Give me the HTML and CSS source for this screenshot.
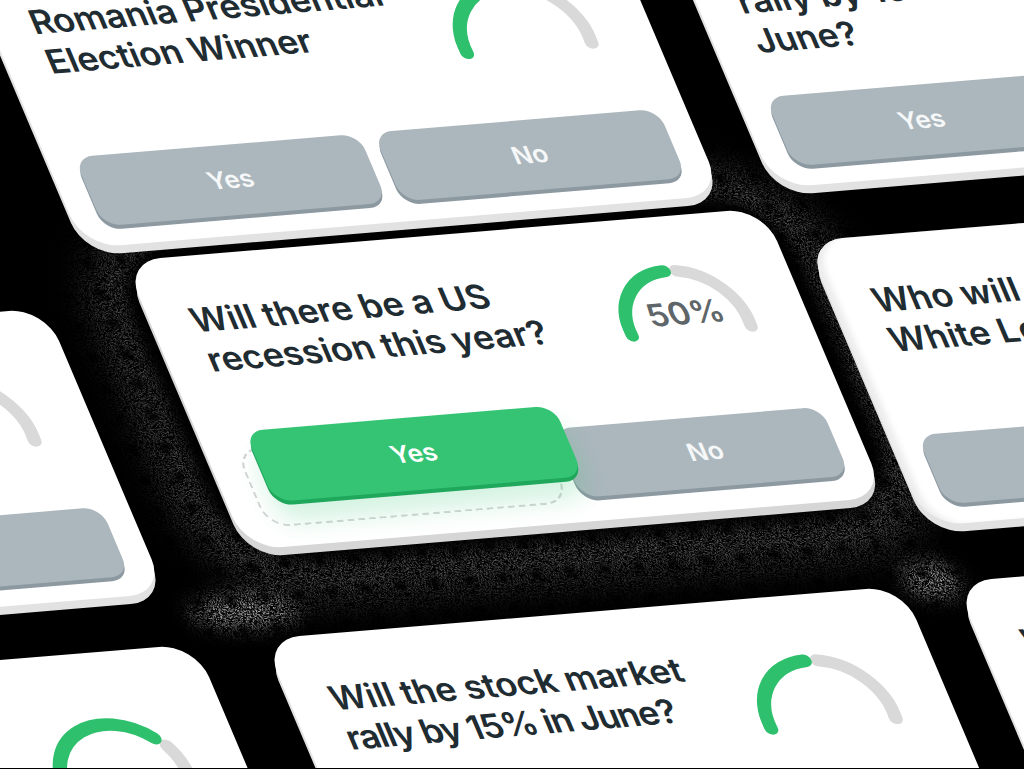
FILE: index.html
```html
<!DOCTYPE html>
<html lang="en">

<head>
    <meta charset="UTF-8">
    <meta name="viewport" content="width=device-width, initial-scale=1.0">
    <title>Prediction cards</title>
    <link rel="stylesheet" href="styles.css">
</head>

<body>
    <svg class="defs" width="0" height="0">
        <filter id="dither" x="-40%" y="-80%" width="180%" height="260%" color-interpolation-filters="sRGB">
            <feTurbulence type="fractalNoise" baseFrequency="1.1" numOctaves="1" seed="4" />
            <feColorMatrix values="0 0 0 0 0  0 0 0 0 0  0 0 0 0 0  9 0 0 0 -4.5" result="grain" />
            <feComposite in="SourceGraphic" in2="grain" operator="in" />
        </filter>
    </svg>

    <main class="scene">
        <!-- sombra pontilhada atras do card principal -->
        <div class="halo"></div>

        <article class="card card--top-left">
            <div class="card-head">
                <h2 class="question">Romania Presidential<br>Election Winner</h2>
                <div class="gauge">
                    <svg class="gauge-arc" viewBox="0 0 124 80">
                        <path class="arc-rest" d="M71 10.7A56 56 0 0 1 117.8 70.9" />
                        <path class="arc-fill" d="M6.2 70.9A56 56 0 0 1 60 10" />
                    </svg>
                </div>
            </div>
            <div class="actions">
                <div class="btn">Yes</div>
                <div class="btn">No</div>
            </div>
        </article>

        <article class="card card--top-right">
            <div class="card-head">
                <h2 class="question">Will the stock market<br>rally by 15% in<br>June?</h2>
            </div>
            <div class="actions">
                <div class="btn">Yes</div>
                <div class="btn">No</div>
            </div>
        </article>

        <article class="card card--left">
            <div class="card-head">
                <h2 class="question">Who will win the<br>next election?</h2>
                <div class="gauge">
                    <svg class="gauge-arc" viewBox="0 0 124 80">
                        <path class="arc-rest" d="M71 10.7A56 56 0 0 1 117.8 70.9" />
                        <path class="arc-fill" d="M6.2 70.9A56 56 0 0 1 60 10" />
                    </svg>
                </div>
            </div>
            <div class="actions">
                <div class="btn">Yes</div>
                <div class="btn">No</div>
            </div>
        </article>

        <article class="card card--right">
            <div class="card-head">
                <h2 class="question">Who will win The<br>White Lotus?</h2>
            </div>
            <div class="actions">
                <div class="btn">Yes</div>
                <div class="btn">No</div>
            </div>
        </article>

        <article class="card card--bottom-left">
            <div class="card-head">
                <h2 class="question">Will it rain<br>tomorrow?</h2>
                <div class="gauge">
                    <svg class="gauge-arc" viewBox="0 0 124 80">
                        <path class="arc-rest" d="M110 36A56 56 0 0 1 117.8 70.9" />
                        <path class="arc-fill" d="M6.2 70.9A56 56 0 0 1 102 28" />
                    </svg>
                </div>
            </div>
        </article>

        <article class="card card--bottom">
            <div class="card-head">
                <h2 class="question">Will the stock market<br><span class="tight">rally by 15% in June?</span></h2>
                <div class="gauge">
                    <svg class="gauge-arc" viewBox="0 0 124 80">
                        <path class="arc-rest" d="M71 10.7A56 56 0 0 1 117.8 70.9" />
                        <path class="arc-fill" d="M6.2 70.9A56 56 0 0 1 60 10" />
                    </svg>
                </div>
            </div>
        </article>

        <article class="card card--bottom-right">
            <div class="card-head">
                <h2 class="question">Will there be</h2>
            </div>
        </article>

        <article class="card card--main">
            <div class="card-head">
                <h2 class="question">Will there be a US<br>recession this year?</h2>
                <div class="gauge">
                    <svg class="gauge-arc" viewBox="0 0 124 80">
                        <path class="arc-rest" d="M71 10.7A56 56 0 0 1 117.8 70.9" />
                        <path class="arc-fill" d="M6.2 70.9A56 56 0 0 1 60 10" />
                    </svg>
                    <span class="gauge-value">50%</span>
                </div>
            </div>
            <div class="actions">
                <div class="slot">
                    <div class="btn btn--lifted">Yes</div>
                </div>
                <div class="btn btn--under">No</div>
            </div>
        </article>
    </main>
</body>

</html>
```

FILE: styles.css
```css
/* cena isometrica: cada card e desenhado plano e depois inclinado */
html,
body {
    margin: 0;
    height: 769px;
    background: #000;
    overflow: hidden;
}

.defs {
    position: absolute;
}

.scene {
    position: relative;
    width: 1024px;
    height: 768px;
    overflow: hidden;
    font-family: Inter, 'Liberation Sans', sans-serif;
}

.halo,
.card {
    position: absolute;
    width: 600px;
    height: 290px;
    transform-origin: 0 0;
    transform: matrix(1.065, -0.0885, 0.4167, 0.9833, 0, 0);
}

.halo {
    left: 124px;
    top: 261px;
    height: 294px;
    border-radius: 60px;
    box-shadow: 0 0 14px 16px #000, 3px 6px 34px 54px #565656;
    filter: url(#dither);
}

/* manchas claras nos cantos de baixo da sombra */
.halo::before,
.halo::after {
    content: "";
    position: absolute;
    border-radius: 50%;
    background: #c8c8c8;
    filter: blur(10px);
}

.halo::before {
    left: -75px;
    top: 338px;
    width: 100px;
    height: 32px;
}

.halo::after {
    left: 585px;
    top: 362px;
    width: 50px;
    height: 36px;
}

.card {
    display: flex;
    flex-direction: column;
    box-sizing: border-box;
    border-radius: 34px;
    background: #fff;
    box-shadow: -2px 8px 0 #e2e2e2;
}

.card--main {
    left: 124px;
    top: 261px;
    height: 294px;
    box-shadow: -2px 8px 0 #d6d6d6;
}

.card--top-left {
    left: -37px;
    top: -37px;
}

.card--top-right {
    left: 654px;
    top: -97px;
}

.card--left {
    left: -594px;
    top: 361px;
}

.card--right {
    left: 806px;
    top: 241px;
    box-shadow: inset 9px 0 6px -3px #ececec, -2px 8px 0 #e2e2e2;
}

.card--bottom-left {
    left: -444px;
    top: 697px;
}

.card--bottom {
    left: 263px;
    top: 639px;
}

.card--bottom-right {
    left: 955px;
    top: 582px;
}

.card-head {
    display: flex;
    justify-content: space-between;
    padding: 44px 50px 0 38px;
}

.question {
    margin: 0;
    color: #1f2c32;
    font-size: 33px;
    font-weight: 600;
    letter-spacing: -0.25px;
    line-height: 40px;
    white-space: nowrap;
}

.card--main .question {
    letter-spacing: -0.1px;
}

.card--right .question {
    letter-spacing: 0;
}

.tight {
    letter-spacing: -1.3px;
}

.gauge {
    position: relative;
    flex: none;
    width: 130px;
    height: 84px;
    margin: 11px 4px 0 0;
}

.card--main .gauge {
    width: 124px;
    height: 80px;
    margin: 0;
}

.card--bottom .gauge {
    margin-right: 0;
}

.card--bottom-left .gauge {
    margin: 16px 0 0 0;
}

.gauge-arc {
    display: block;
    width: 100%;
    height: 100%;
    fill: none;
    stroke-width: 12;
    stroke-linecap: round;
}

.arc-fill {
    stroke: #2fc06e;
}

.arc-rest {
    stroke: #d9d9d9;
}

.gauge-value {
    position: absolute;
    left: 2px;
    right: 0;
    top: 34px;
    color: #5f6669;
    font-size: 31px;
    font-weight: 600;
    line-height: 38px;
    text-align: center;
}

.actions {
    display: grid;
    grid-template-columns: 1fr 1fr;
    gap: 14px;
    margin-top: auto;
    padding: 0 26px 20px 26px;
}

.card--main .actions {
    padding: 0 24px 24px 26px;
}

.btn {
    height: 70px;
    border-radius: 17px;
    background: #acb7bd;
    box-shadow: -1px 4px 0 #8d99a1;
    color: #f5f7f8;
    font-size: 24px;
    font-weight: 600;
    line-height: 70px;
    text-align: center;
}

.slot {
    position: relative;
    border-radius: 20px;
}

/* contorno tracejado onde o botao estava */
.slot::before {
    content: "";
    position: absolute;
    inset: -6px -18px -4px 2px;
    border: 2px dashed #d4d6d6;
    border-radius: 22px;
}

.btn--lifted {
    position: relative;
    z-index: 1;
    height: 72px;
    margin: -1px -11px;
    transform: translate(29px, -22px);
    background: #34c474;
    box-shadow: -1px 4px 0 #1fa75c, 0 20px 24px rgba(52, 196, 116, 0.22);
    color: #fff;
    line-height: 72px;
}

.btn--under {
    margin-left: 16px;
    padding-left: 8px;
}
```
